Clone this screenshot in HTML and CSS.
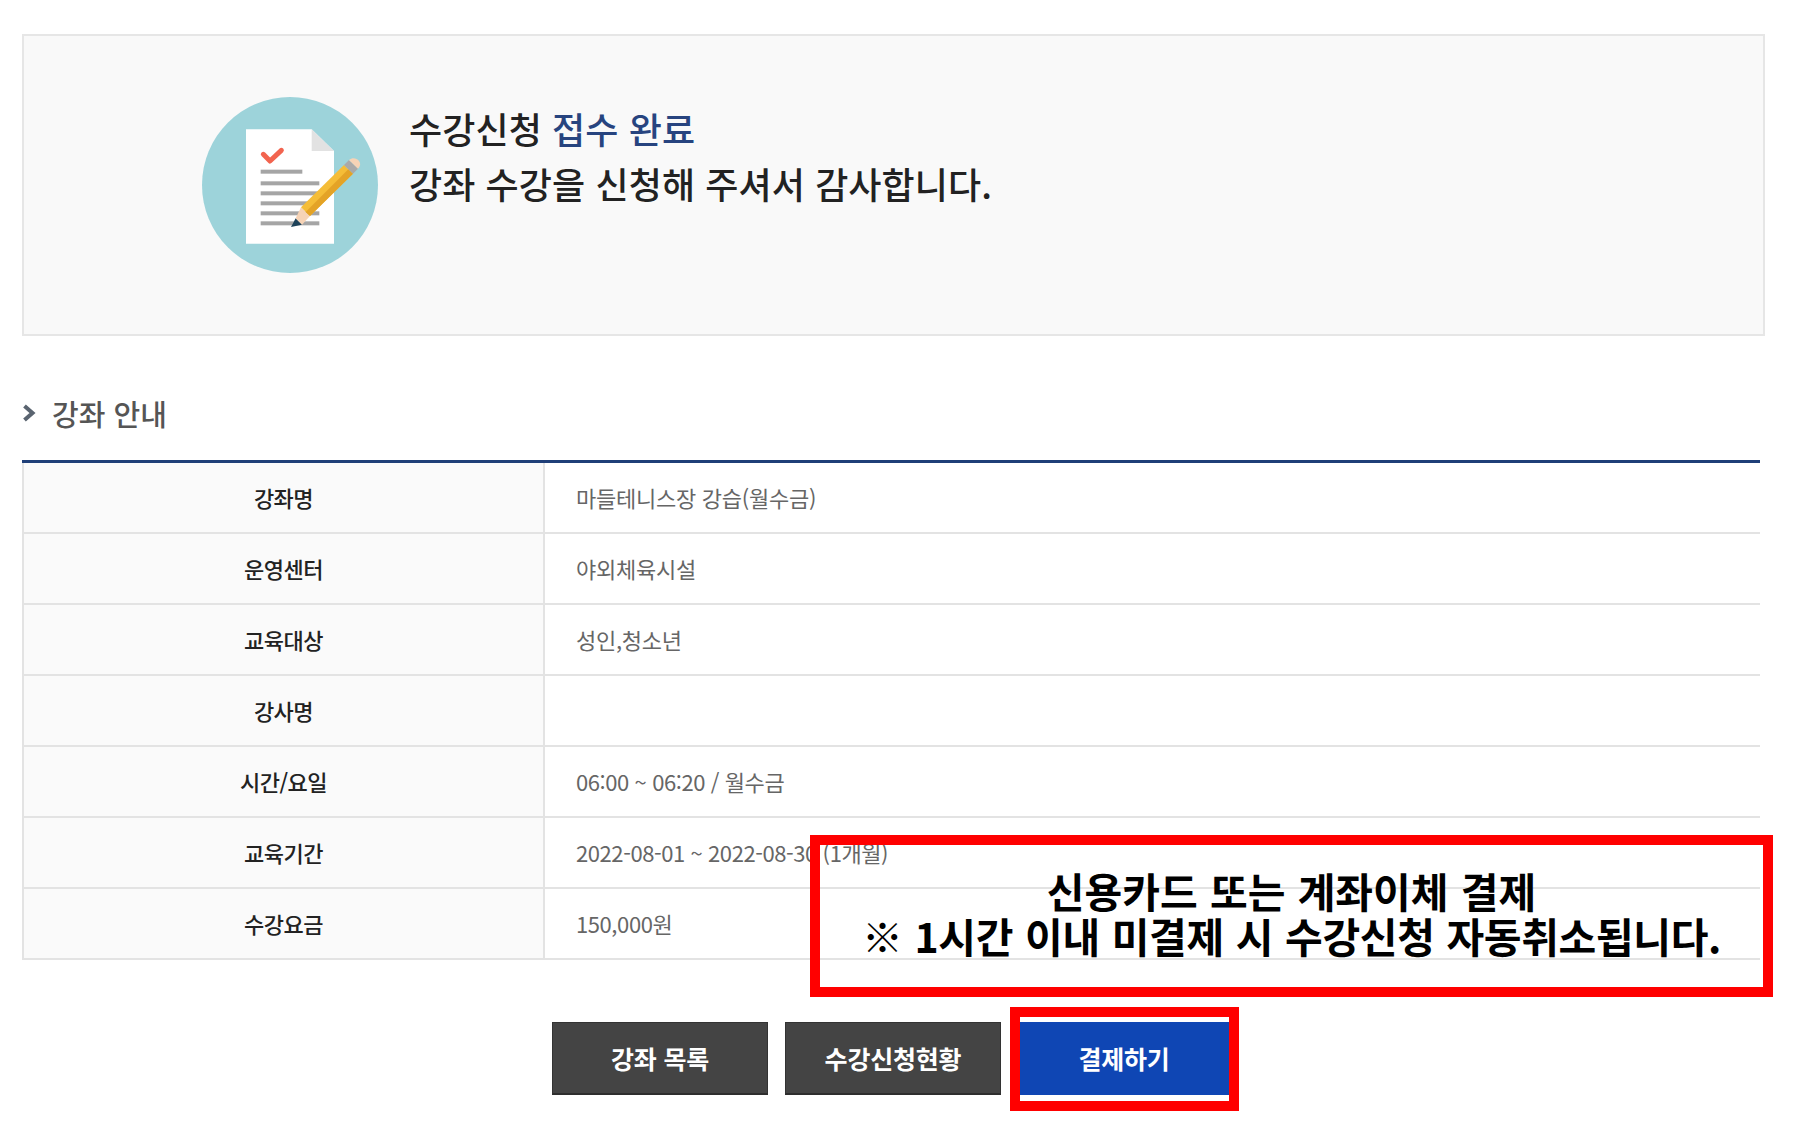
FILE: index.html
```html
<!DOCTYPE html>
<html lang="ko">
<head>
<meta charset="utf-8">
<title>수강신청 접수 완료</title>
<link rel="stylesheet" href="styles.css">
</head>
<body>
<main class="page">
  <section class="hero">
    <svg class="hero-icon" viewBox="36 36 528 528" aria-hidden="true">
      <circle cx="300" cy="300" r="264" fill="#9dd3da"/>
      <path d="M168 133H365L432 198V476H168Z" fill="#fff"/>
      <path d="M365 133L432 198H365Z" fill="#e2e2e2"/>
      <path d="M220 208L240 228L274 196" fill="none" stroke="#f2644f" stroke-width="15" stroke-linecap="round" stroke-linejoin="round"/>
      <g fill="#a5a5a5">
        <rect x="212" y="254" width="125" height="12"/>
        <rect x="212" y="289" width="176" height="12"/>
        <rect x="212" y="319" width="176" height="12"/>
        <rect x="212" y="349" width="176" height="12"/>
        <rect x="212" y="379" width="176" height="12"/>
        <rect x="212" y="409" width="176" height="12"/>
      </g>
      <path d="M303 426L317 400L336 419Z" fill="#1d4259"/>
      <path d="M317 400L333 367L360 393L336 419Z" fill="#f6d3b6"/>
      <path d="M333 367L462 240L489 266L360 393Z" fill="#f5bd37"/>
      <path d="M347 381L475 253L489 266L360 393Z" fill="#e4a326"/>
      <path d="M462 240L477 225L504 251L489 266Z" fill="#a9a9a9"/>
      <path d="M477 225C488 216 500 220 507 228C513 236 511 244 504 251Z" fill="#f6d3b6"/>
    </svg>
    <p class="hero-text">수강신청 <span class="hero-accent">접수 완료</span><br>강좌 수강을 신청해 주셔서 감사합니다.</p>
  </section>

  <h2 class="section-title">
    <svg class="chevron" viewBox="0 0 14 18" aria-hidden="true"><path d="M2 2L10 9L2 16" fill="none" stroke="#5a6470" stroke-width="4"/></svg>
    강좌 안내
  </h2>

  <table class="info">
    <tbody>
      <tr><th>강좌명</th><td>마들테니스장 강습(월수금)</td></tr>
      <tr><th>운영센터</th><td>야외체육시설</td></tr>
      <tr><th>교육대상</th><td>성인,청소년</td></tr>
      <tr><th>강사명</th><td></td></tr>
      <tr><th>시간/요일</th><td class="num">06:00 ~ 06:20 / 월수금</td></tr>
      <tr><th>교육기간</th><td class="num">2022-08-01 ~ 2022-08-30 (1개월)</td></tr>
      <tr><th>수강요금</th><td class="num">150,000원</td></tr>
    </tbody>
  </table>

  <div class="actions">
    <a class="btn btn-dark">강좌 목록</a>
    <a class="btn btn-dark">수강신청현황</a>
    <a class="btn btn-blue">결제하기</a>
  </div>

  <div class="note">신용카드 또는 계좌이체 결제<br><span class="note-warning">※ 1시간 이내 미결제 시 수강신청 자동취소됩니다.</span></div>
  <div class="pay-frame"></div>
</main>
</body>
</html>
```
FILE: styles.css
```css
* { box-sizing: border-box; }
html, body { margin: 0; padding: 0; background: #fff; }
body { font-family: "Noto Sans CJK KR", "Noto Sans", sans-serif; }
.page { position: relative; width: 1802px; height: 1125px; padding: 34px 0 0 22px; overflow: hidden; }

.hero {
  width: 1743px; height: 302px;
  display: flex; align-items: flex-start; gap: 31px;
  padding: 61px 0 0 178px;
  background: #f9f9f9; border: 2px solid #e6e6e6;
}
.hero-icon { width: 176px; height: 176px; flex: none; display: block; }
.hero-text { margin: 0; padding-top: 4px; font-size: 36px; line-height: 55px; color: #222; font-weight: 500; letter-spacing: 0.1px; }
.hero-accent { color: #27447f; }

.section-title {
  display: flex; align-items: center; gap: 15px;
  margin: 53px 0 0; height: 48px;
  font-size: 29px; font-weight: 500; color: #555;
}
.chevron { width: 15px; height: 18px; flex: none; }

.info { width: 1738px; margin-top: 23px; border-collapse: collapse; table-layout: fixed; border-top: 3px solid #1f3f78; }
.info th, .info td { height: 71px; padding: 0; border-bottom: 2px solid #e3e3e3; font-size: 22px; }
.info th { width: 521px; background: #fafafa; color: #222; font-weight: 500; letter-spacing: -0.5px; border-left: 2px solid #e3e3e3; border-right: 2px solid #e3e3e3; }
.info td { padding-left: 31px; color: #666; font-weight: 400; letter-spacing: -0.25px; }
.info td.num { letter-spacing: -0.42px; }

.actions { display: flex; justify-content: center; gap: 17px; width: 1738px; margin-top: 62px; }
.btn { width: 216px; height: 73px; display: flex; align-items: center; justify-content: center; color: #fff; font-size: 25px; font-weight: 700; letter-spacing: -0.2px; }
.btn-dark { background: #444; border: 1px solid #333; border-bottom: 2px solid #2e2e2e; }
.btn-blue { width: 212px; background: #0f46b4; }

.note {
  position: absolute; left: 810px; top: 835px; width: 963px; height: 162px;
  padding-top: 23px;
  border: 10px solid #f00;
  text-align: center; color: #000; font-size: 41px; line-height: 45px; font-weight: 700; word-spacing: 0.8px;
}
.note-warning { letter-spacing: -0.35px; }
.pay-frame { position: absolute; left: 1010px; top: 1007px; width: 229px; height: 104px; border: 10px solid #f00; }
```
